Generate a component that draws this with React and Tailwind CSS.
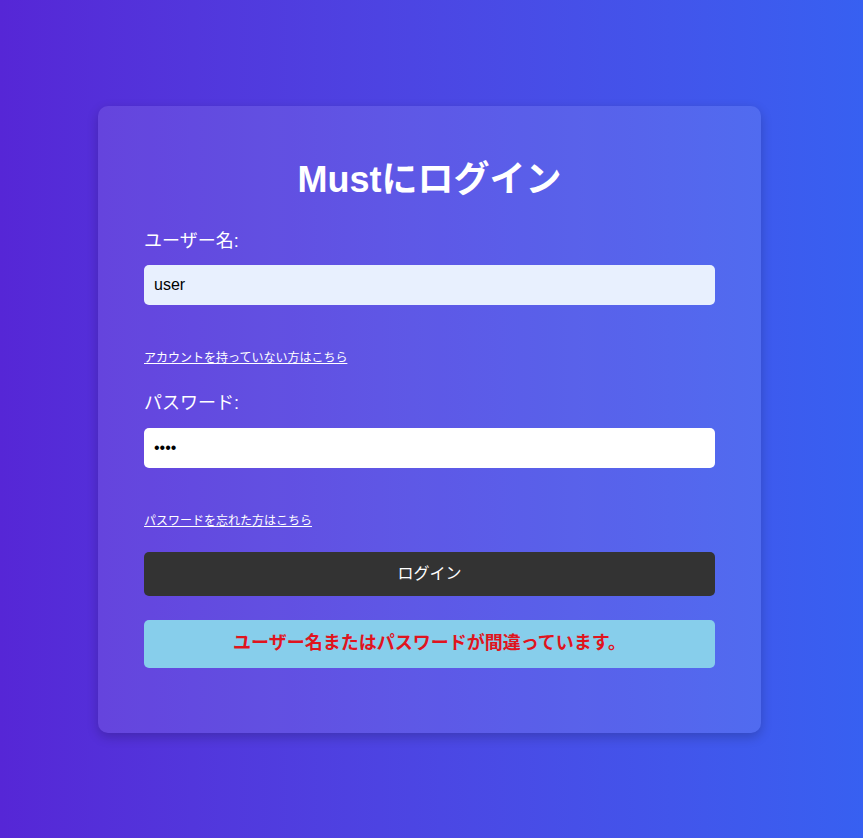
import { useState } from "react";

export default function App() {
  const [username, setUsername] = useState("user");
  const [password, setPassword] = useState("pass");

  return (
    <main
      className="min-h-screen flex items-center justify-center bg-gradient-to-r from-[#5626d6] to-[#3760f1]"
      style={{ fontFamily: '"Liberation Sans", "Noto Sans CJK JP", sans-serif' }}
    >
      <div className="mr-[4px] w-[663px] rounded-[10px] bg-white/10 shadow-[0_4px_12px_rgba(0,0,0,0.2)] px-[46px] pt-[52px] pb-[65px]">
        {/* Title */}
        <h1 className="text-center text-[36px] leading-[43px] font-bold text-white">
          Mustにログイン
        </h1>

        <form onSubmit={(e) => e.preventDefault()} className="flex flex-col">
          <label className="mt-[27px] text-[18px] leading-[27px] text-white">ユーザー名:</label>
          <input
            type="text"
            value={username}
            onChange={(e) => setUsername(e.target.value)}
            className="mt-[10px] h-[40px] w-full rounded-[5px] bg-[#e8f0fe] px-[10px] text-[16px] text-black outline-none"
          />

          <a href="#" className="mt-[44px] self-start text-[12px] leading-[18px] text-white underline">
            アカウントを持っていない方はこちら
          </a>

          <label className="mt-[23px] text-[18px] leading-[27px] text-white">パスワード:</label>
          <input
            type="password"
            value={password}
            onChange={(e) => setPassword(e.target.value)}
            className="mt-[11px] h-[40px] w-full rounded-[5px] bg-white px-[10px] text-[16px] text-black outline-none"
          />

          <a href="#" className="mt-[44px] self-start text-[12px] leading-[18px] text-white underline">
            パスワードを忘れた方はこちら
          </a>

          <button
            type="submit"
            className="mt-[22px] h-[44px] w-full rounded-[5px] bg-[#333333] text-[16px] text-white"
          >
            ログイン
          </button>
        </form>

        {/* Error */}
        <div className="mt-[24px] flex h-[48px] items-center justify-center rounded-[5px] bg-[#87ceeb] text-[18px] font-bold text-[#e0141e]">
          ユーザー名またはパスワードが間違っています。
        </div>
      </div>
    </main>
  );
}
